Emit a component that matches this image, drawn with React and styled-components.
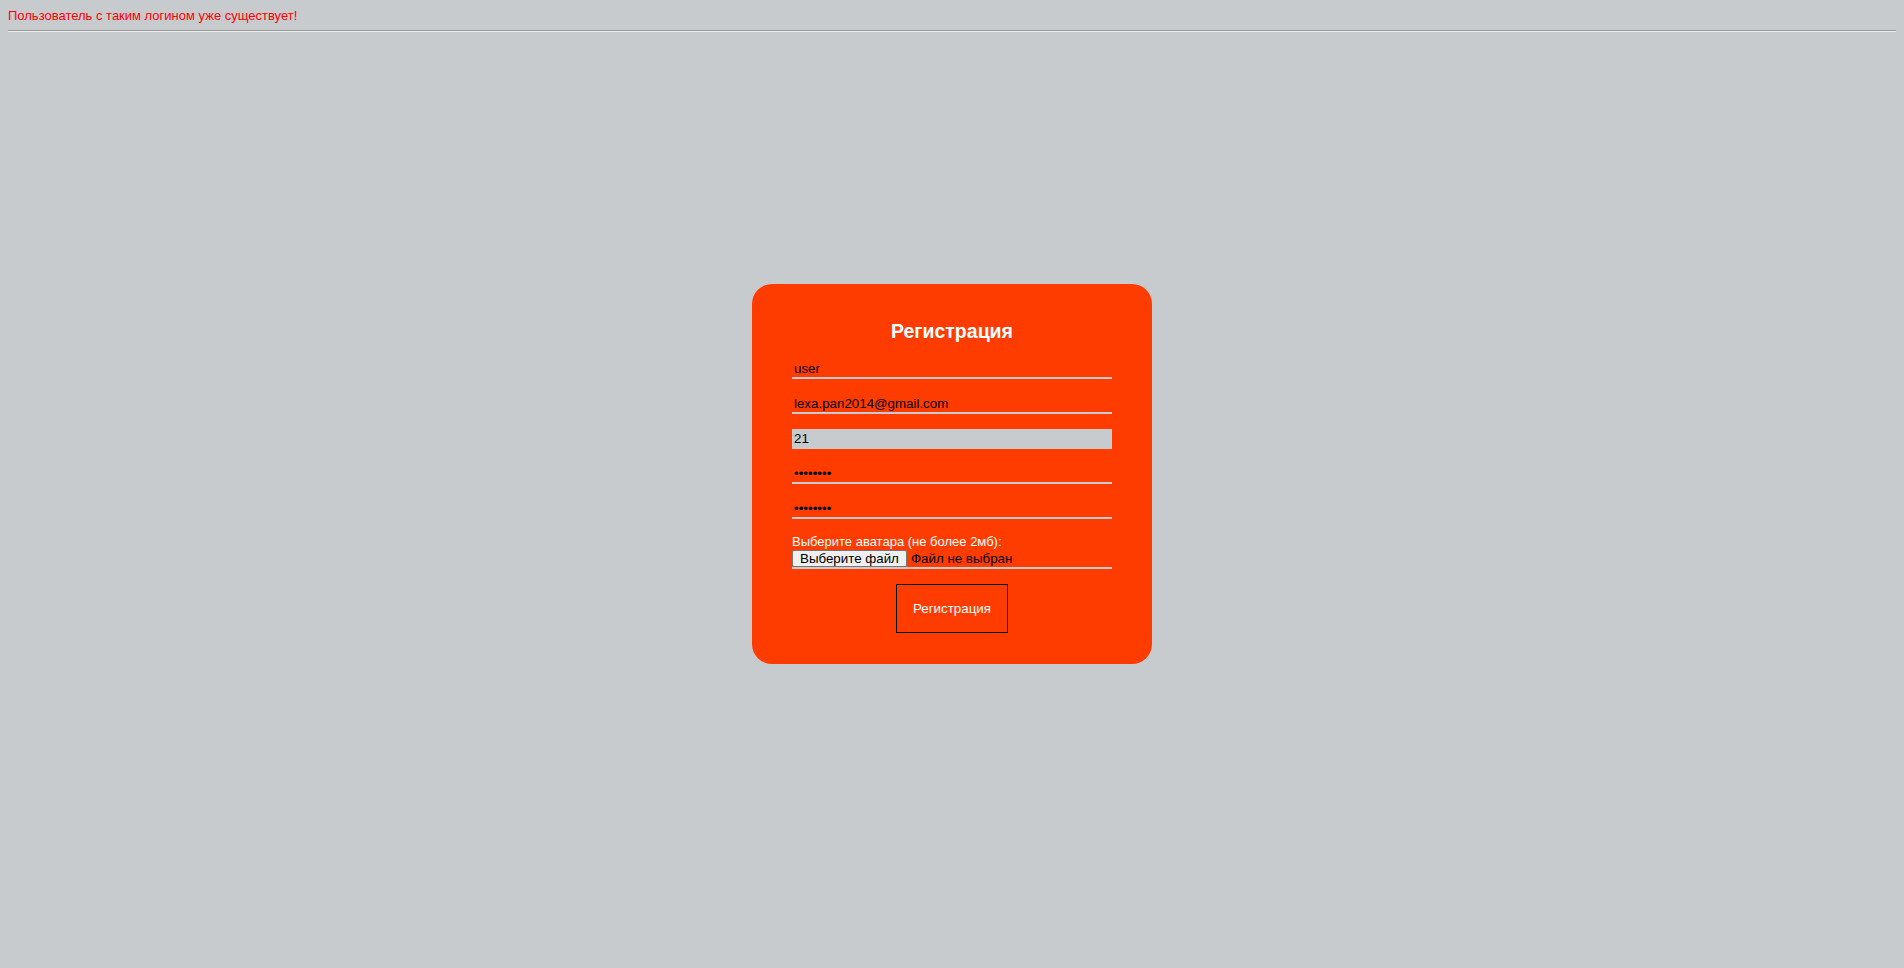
import styled, { createGlobalStyle } from "styled-components";

const GlobalStyle = createGlobalStyle`
  body {
    margin: 8px;
    background-color: #c8cbce;
    font-family: "Liberation Sans", Arial, sans-serif;
  }
`;

const ErrorText = styled.div`
  color: #ff0000;
  font-size: 13px;
  line-height: 14px;
  padding-top: 1px;
  margin-bottom: -1px;
`;

const Divider = styled.hr`
  height: 0;
  margin: 8px 0;
  border: none;
  border-top: 1px solid #9a9a9a;
  border-bottom: 1px solid #eeeeee;
`;

const Main = styled.main`
  display: flex;
  justify-content: center;
  padding-top: 244px;
`;

const Form = styled.form`
  width: 400px;
  box-sizing: border-box;
  padding: 36px 40px 31px;
  background-color: #ff3c00;
  border-radius: 20px;
  display: flex;
  flex-direction: column;
  align-items: center;
`;

const Heading = styled.h2`
  margin: 0 0 16px;
  color: #ffffff;
  font-size: 19.5px;
  line-height: 23px;
  font-weight: bold;
`;

const StyledInput = styled.input`
  display: block;
  box-sizing: border-box;
  width: 100%;
  height: 20px;
  margin: 0 0 15px;
  padding: 0 2px;
  border: none;
  border-bottom: 2px solid #c8cbce;
  background-color: ${(props) => (props.$active ? "#c8cbce" : "transparent")};
  color: #000000;
  font-family: "Liberation Sans", Arial, sans-serif;
  font-size: 13.333px;
  line-height: 15px;
  outline: none;
`;

const FileField = styled.div`
  width: 100%;
  margin-bottom: 15px;
`;

const FileLabel = styled.label`
  display: block;
  color: #ffffff;
  font-size: 13px;
  line-height: 15px;
`;

const FileRow = styled.div`
  display: flex;
  align-items: flex-start;
  gap: 4px;
  height: 18px;
  border-bottom: 2px solid #c8cbce;
  font-size: 13.333px;
  line-height: 15px;
  color: #000000;
`;

const FileButton = styled.button`
  height: 17px;
  margin-top: 1px;
  padding: 0 7px;
  border: 1px solid #767676;
  border-radius: 2px;
  background-color: #efefef;
  color: #000000;
  font-family: "Liberation Sans", Arial, sans-serif;
  font-size: 13.333px;
  line-height: 15px;
`;

const FileName = styled.span`
  padding-top: 2px;
`;

const SubmitButton = styled.button`
  padding: 16px;
  border: 1px solid #000000;
  background-color: transparent;
  color: #ffffff;
  font-family: "Liberation Sans", Arial, sans-serif;
  font-size: 13.333px;
  line-height: 15px;
  cursor: pointer;
`;

const App = () => {
  return (
    <>
      <GlobalStyle />
      <ErrorText>Пользователь с таким логином уже существует!</ErrorText>
      <Divider />
      <Main>
        <Form onSubmit={(event) => event.preventDefault()}>
          <Heading>Регистрация</Heading>
          <StyledInput type="text" defaultValue="user" />
          <StyledInput type="email" defaultValue="lexa.pan2014@gmail.com" />
          <StyledInput type="text" defaultValue="21" $active />
          <StyledInput type="password" defaultValue="password" />
          <StyledInput type="password" defaultValue="password" />
          <FileField>
            <FileLabel>Выберите аватара (не более 2мб):</FileLabel>
            <FileRow>
              <FileButton type="button">Выберите файл</FileButton>
              <FileName>Файл не выбран</FileName>
            </FileRow>
          </FileField>
          <SubmitButton type="submit">Регистрация</SubmitButton>
        </Form>
      </Main>
    </>
  );
};

export default App;
